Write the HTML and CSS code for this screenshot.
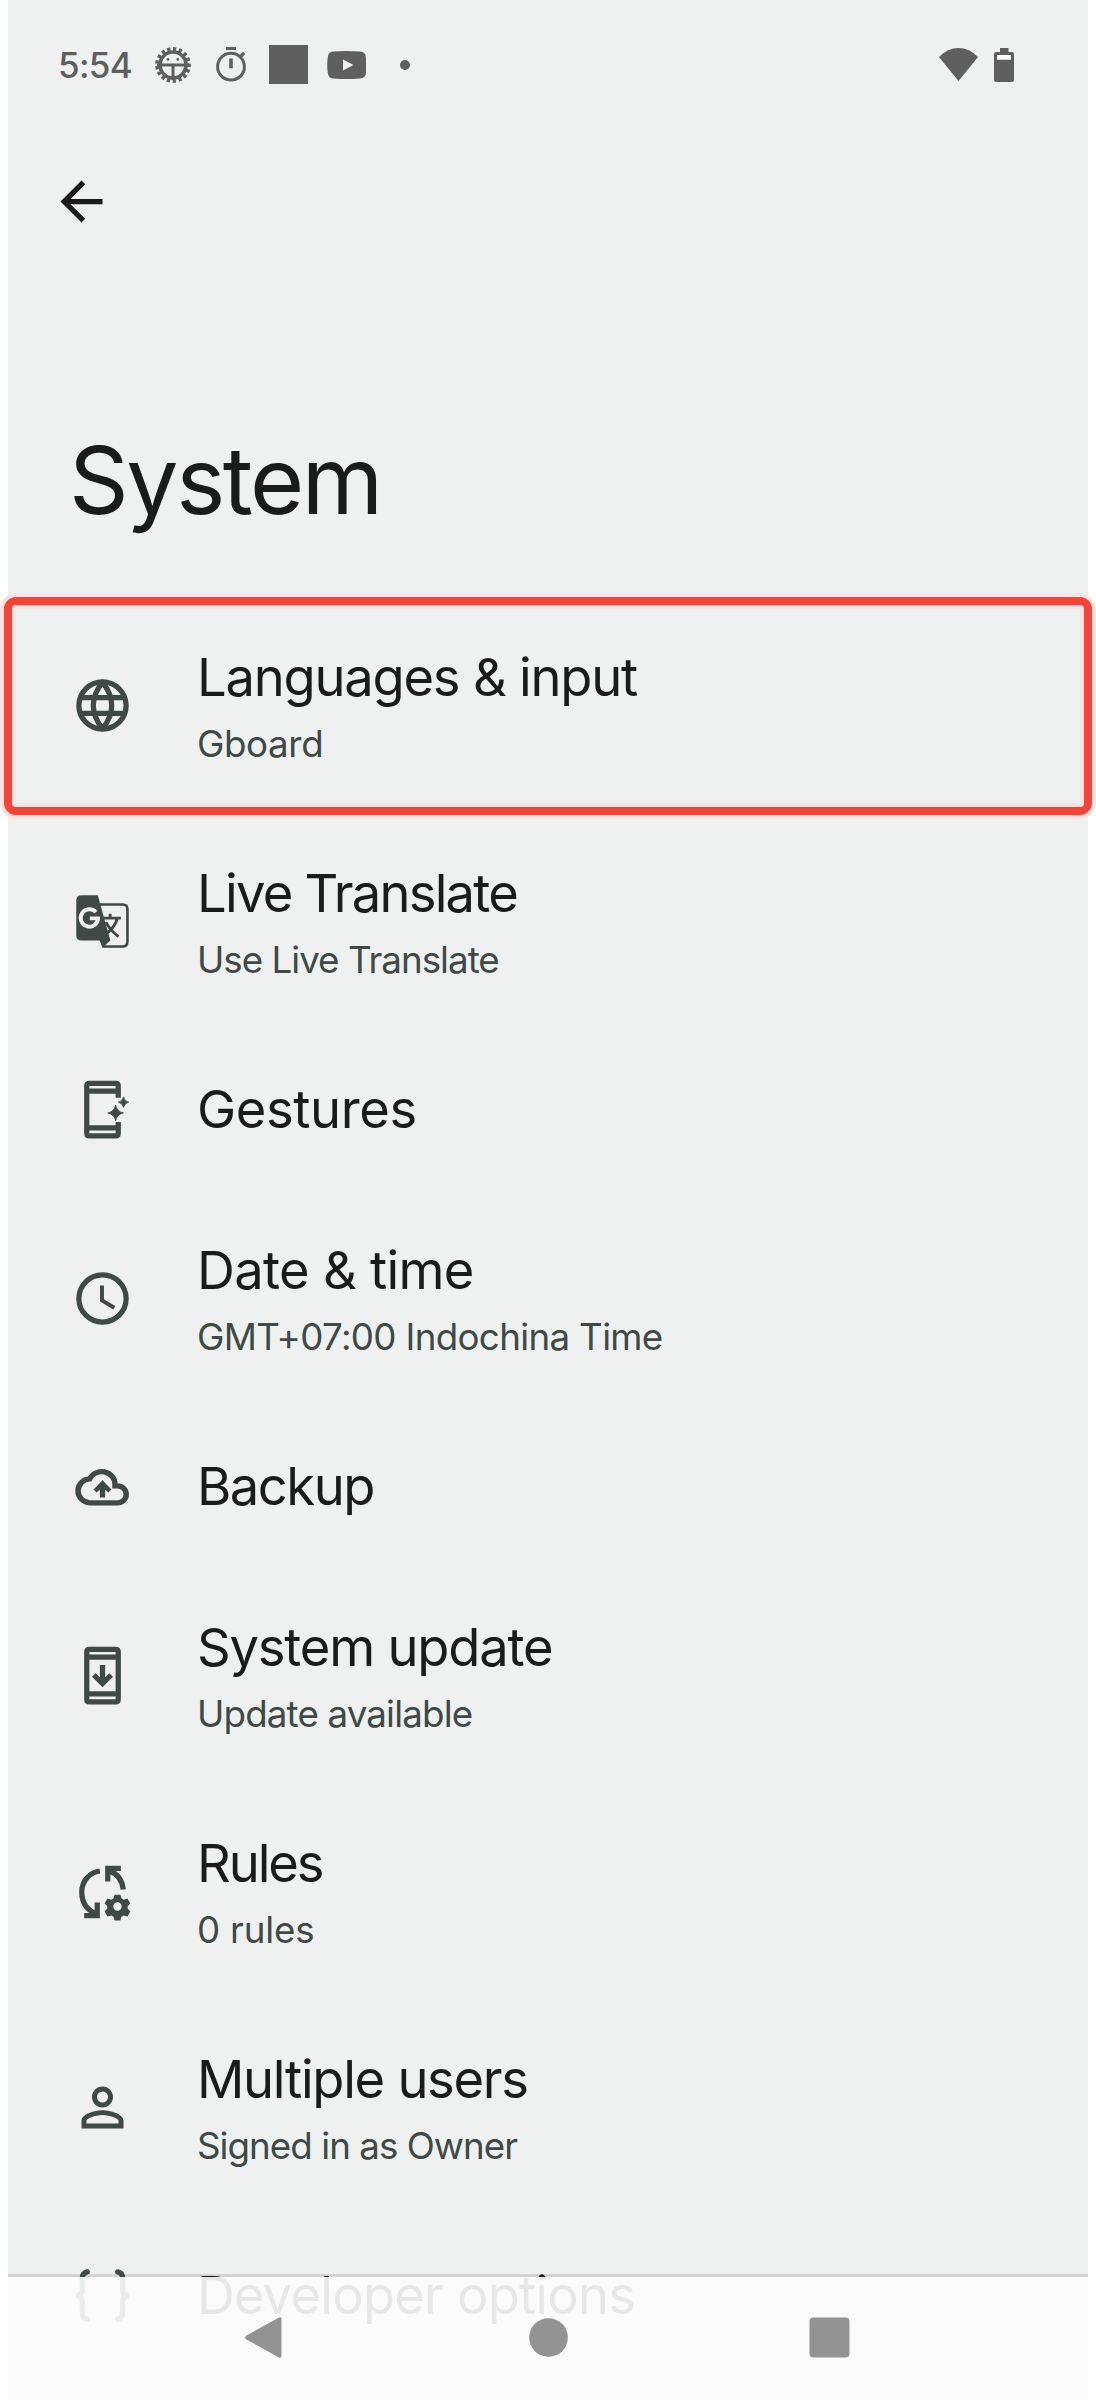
FILE: index.html
```
<!DOCTYPE html>
<html lang="en">
<head>
<meta charset="utf-8">
<title>System</title>
<link rel="stylesheet" href="styles.css">
</head>
<body>
<div class="phone">
  <header class="status">
    <span class="clock">5:54</span>
    <div class="notifications">
      <svg viewBox="0 0 39 39"><circle cx="20" cy="20" r="13" fill="none" stroke="currentColor" stroke-width="3.600"/><circle cx="20" cy="20" r="15.600" fill="none" stroke="currentColor" stroke-width="4.600" pathLength="34" stroke-dasharray="1.100 .900" stroke-dashoffset=".5"/><path d="M4 20h32M20 20v15" stroke="currentColor" stroke-width="3"/><circle cx="15" cy="14.4" r="1.400"/><circle cx="24.8" cy="14.4" r="1.400"/></svg>
      <svg viewBox="0 0 39 39"><circle cx="20" cy="21.7" r="13.4" fill="none" stroke="currentColor" stroke-width="3"/><path d="M15 2h10v3H15zM18.2 13.6h3.600v9.6h-3.600z"/><path d="M29 12l4.200-4.200" stroke="currentColor" stroke-width="3.200"/></svg>
      <svg viewBox="0 0 39 39"><path d="M0 0h39v39H0z"/></svg>
      <svg viewBox="0 0 39 39"><path fill-rule="evenodd" d="M6 6.400Q19.500 5.400 33 6.400Q39 6.800 39 13V27Q39 33.200 33 33.600Q19.500 34.600 6 33.600Q1.500 33.200.8 28Q-.4 20 .8 12Q1.500 6.800 6 6.400zM16 14.500v11l10.500-5.500z"/></svg>
      <svg viewBox="0 0 39 39"><circle cx="20" cy="20" r="5"/></svg>
    </div>
    <div class="signals">
      <svg class="wifi" viewBox="0 0 39 33"><path d="M0 9Q8.500 0 19.500 0T39 9L19.500 33z"/></svg>
      <svg class="battery" viewBox="0 0 20 34"><path fill-rule="evenodd" d="M6 0h8.500v4H18q2 0 2 2v26q0 2-2 2H2q-2 0-2-2V6q0-2 2-2h4zM3 7v4.500h14V7z"/><path class="battery-gap" d="M3 7h14v4.500H3z"/></svg>
    </div>
  </header>

  <svg class="back" viewBox="0 0 24 24"><path d="M20 11H7.830l5.590-5.590L12 4l-8 8 8 8 1.410-1.410L7.830 13H20v-2z"/></svg>
  <h1 class="page-title">System</h1>

  <main class="list">
    <div class="row highlighted">
      <svg class="icon" viewBox="0 0 24 24"><g fill="none" stroke="currentColor" stroke-width="2" stroke-linejoin="round"><circle cx="12" cy="12" r="9"/><path d="M3.500 9h17M3.500 15h17M12 3.200C9.700 6 8.500 8.500 8.500 12s1.200 6 3.500 8.800c2.300-2.800 3.500-5.300 3.500-8.800S14.300 6 12 3.200z"/></g></svg>
      <div class="text"><div class="name languages">Languages &amp; input</div><div class="summary gboard">Gboard</div></div>
    </div>
    <div class="row">
      <svg class="icon" viewBox="0 0 24 24"><path d="M4 2h6.200L15 19.200 12 22l-1.100-2.800H4q-2 0-2-2V4q0-2 2-2z"/><g fill="none" stroke="currentColor"><path d="M11 5.500h8.700q1.800 0 1.800 1.800v12.400q0 1.800-1.800 1.800H12" stroke-width="1"/><path d="M12.500 10.700H19M14.900 9v1.700M17.600 10.700c-.4 2.300-2 4.300-4.100 6M13.300 12.200c1 2.200 2.500 3.800 4.800 5.600" stroke-width="1.100"/></g><path class="cut" d="M9.500 8.500A3.300 3.300 0 1 0 10.300 10.800H7.200"/></svg>
      <div class="text"><div class="name live">Live Translate</div><div class="summary use-live">Use Live Translate</div></div>
    </div>
    <div class="row single">
      <svg class="icon" viewBox="0 0 24 24"><path fill-rule="evenodd" d="M7 1h10q2 0 2 2v4.500h-2V6H7v12h10v-1.200h2V21q0 2-2 2H7q-2 0-2-2V3q0-2 2-2zM7 3v1h10V3zM7 20v1h10v-1z"/><path d="M17 10.300Q17.500 12.800 20 13.300Q17.500 13.800 17 16.300Q16.500 13.800 14 13.300Q16.500 12.800 17 10.300zM20 7.200Q20.400 8.900 22 9.200Q20.400 9.500 20 11.200Q19.600 9.500 18 9.200Q19.600 8.900 20 7.200z" stroke="currentColor" stroke-width=".3"/></svg>
      <div class="text"><div class="name gestures">Gestures</div></div>
    </div>
    <div class="row">
      <svg class="icon" viewBox="0 0 24 24"><g fill="none" stroke="currentColor"><circle cx="12" cy="12" r="9" stroke-width="2"/><path d="M11.800 7v5.700l4.700 2.800" stroke-width="1.500"/></g></svg>
      <div class="text"><div class="name date">Date &amp; time</div><div class="summary zone">GMT+07:00 Indochina Time</div></div>
    </div>
    <div class="row single">
      <svg class="icon" viewBox="0 0 24 24"><path d="M7.500 18.200H17.700a3.200 3.200 0 0 0 0-6.400H16.800V11a4.900 4.900 0 0 0-9.300-1.900A4.560 4.560 0 0 0 7.500 18.200z" transform="matrix(1.040 0 0 1 -.700 0)" fill="none" stroke="currentColor" stroke-width="2"/><path d="M12 9.600l3.400 3.500-1.200 1.200-1.200-1.200v3.100h-2v-3.100l-1.200 1.200-1.200-1.200z"/></svg>
      <div class="text"><div class="name backup">Backup</div></div>
    </div>
    <div class="row">
      <svg class="icon" viewBox="0 0 24 24"><path fill-rule="evenodd" d="M7 1h10q2 0 2 2v18q0 2-2 2H7q-2 0-2-2V3q0-2 2-2zM7 3v1h10V3zM7 6v12h10V6zM7 20v1h10v-1z"/><path d="M12 16.500l4-4-1.400-1.400-1.600 1.600V8h-2v4.700l-1.600-1.600L8 12.500z"/></svg>
      <div class="text"><div class="name update">System update</div><div class="summary available">Update available</div></div>
    </div>
    <div class="row">
      <svg class="icon" viewBox="0 0 24 24"><g fill="none" stroke="currentColor" stroke-width="2"><path d="M11 4.200C7 4.800 4.100 8 4.100 12.200c0 3.800 1.900 6.800 5.400 8.300M5 21.200h5V16.200M14 8.200V3.200h5M14.300 4c3.300 1.200 5.300 3.900 5.600 7.200"/></g><path fill-rule="evenodd" d="M16.600 13.200h2.200l.4 1.400.9.500 1.400-.4 1.100 1.900-1 1v1l1 1-1.100 1.900-1.400-.4-.9.500-.4 1.400h-2.200l-.4-1.400-.9-.5-1.400.4-1.100-1.900 1-1v-1l-1-1 1.100-1.900 1.400.4.900-.5zM17.700 16.100a1.600 1.600 0 1 0 0 3.200 1.600 1.600 0 0 0 0-3.200z"/></svg>
      <div class="text"><div class="name rules">Rules</div><div class="summary rule-count">0 rules</div></div>
    </div>
    <div class="row">
      <svg class="icon" viewBox="0 0 24 24"><path d="M12 5.900a2.100 2.100 0 1 1 0 4.200 2.100 2.100 0 0 1 0-4.200m0 9c2.970 0 6.100 1.460 6.100 2.100v1.100H5.900V17c0-.64 3.130-2.100 6.100-2.100M12 4C9.790 4 8 5.790 8 8s1.790 4 4 4 4-1.790 4-4-1.790-4-4-4zm0 9c-2.670 0-8 1.340-8 4v3h16v-3c0-2.660-5.330-4-8-4z"/></svg>
      <div class="text"><div class="name users">Multiple users</div><div class="summary owner">Signed in as Owner</div></div>
    </div>
    <div class="row single">
      <svg class="icon" viewBox="0 0 24 24"><path d="M6.200 3C4.800 3.300 4.300 4 4.300 5.500v4C4.300 11 3.800 12 2 12c1.800 0 2.300 1 2.300 2.500v4c0 1.500.5 2.200 1.900 2.500M17.800 3c1.400.3 1.900 1 1.900 2.500v4c0 1.500.5 2.500 2.300 2.500-1.800 0-2.300 1-2.300 2.500v4c0 1.500-.5 2.200-1.900 2.500" fill="none" stroke="currentColor" stroke-width="2" stroke-linecap="round"/></svg>
      <div class="text"><div class="name developer">Developer options</div></div>
    </div>
  </main>

  <nav class="navbar">
    <svg viewBox="0 0 63 63"><path d="M10.500 29.500L43 11.500q2.500-1 2.500 1.500v37q0 2.500-2.500 1.500L10.500 33.500q-3-2 0-4z"/></svg>
    <svg viewBox="0 0 63 63"><circle cx="31.500" cy="31.500" r="19.300"/></svg>
    <svg viewBox="0 0 63 63"><rect x="11.500" y="11.500" width="40" height="40" rx="4"/></svg>
  </nav>
</div>
</body>
</html>
```
FILE: styles.css
```
* {
  box-sizing: border-box;
}

body {
  margin: 0;
  background: #fff;
  font-family: Inter, Roboto, sans-serif;
  color: #191c1b;
}

svg {
  display: block;
  flex: none;
  fill: currentColor;
}

.phone {
  position: relative;
  width: 1080px;
  height: 2400px;
  margin: 0 8px;
  background: #eef1f0;
}

.status {
  display: flex;
  align-items: center;
  height: 129px;
  padding: 0 74px 0 50px;
  color: #5f5f5f;
}

.clock {
  width: 95px;
  font-size: 35px;
  font-weight: 500;
  letter-spacing: -0.7px;
}

.notifications {
  display: flex;
  gap: 19px;
}

.notifications svg {
  width: 39px;
  height: 39px;
}

.signals {
  display: flex;
  align-items: center;
  gap: 16px;
  margin-left: auto;
}

.wifi {
  width: 39px;
  height: 33px;
}

.battery {
  width: 20px;
  height: 34px;
}

.battery-gap {
  fill: #fafafa;
}

.back {
  width: 63px;
  height: 63px;
  margin: 41px 0 0 42px;
}

.page-title {
  margin: 190px 0 0 61px;
  font-size: 93px;
  font-weight: 400;
  line-height: 114px;
  letter-spacing: -2.4px;
}

.list {
  height: 1803px;
  margin-top: 60px;
  overflow: visible;
}

.row {
  position: relative;
  z-index: 1;
  display: flex;
  align-items: center;
  gap: 63px;
  height: 216px;
  padding-left: 63px;
}

.row.single {
  height: 161px;
}

.highlighted::after {
  content: "";
  position: absolute;
  inset: 0 -4px -2px;
  border: 8px solid #f24439;
  border-radius: 12px;
  box-shadow: 0 0 0 4px #ffe2df, inset 0 0 0 4px #ffe2df;
}

.icon {
  width: 63px;
  height: 63px;
  color: #404946;
}

.cut {
  fill: none;
  stroke: #eef1f0;
  stroke-width: 1.5px;
}

.text {
  align-self: flex-start;
  padding-top: 47px;
  white-space: nowrap;
}

.name {
  font-size: 52.5px;
  line-height: 66px;
}

.summary {
  margin-top: 10px;
  font-size: 36.75px;
  line-height: 47px;
  color: #404946;
}

.languages { letter-spacing: -1.23px; }
.gboard { letter-spacing: -0.4px; }
.live { letter-spacing: -1.75px; }
.use-live { letter-spacing: -1px; }
.gestures { letter-spacing: -0.4px; }
.date { letter-spacing: -0.7px; }
.zone { letter-spacing: -0.68px; }
.backup { letter-spacing: -1.5px; }
.update { letter-spacing: -1.2px; }
.available { letter-spacing: -0.85px; }
.rules { letter-spacing: -2.1px; }
.rule-count { letter-spacing: -0.2px; }
.users { letter-spacing: -1.3px; }
.owner { letter-spacing: -0.97px; }
.developer { letter-spacing: -0.8px; }

.navbar {
  position: absolute;
  inset: auto 0 0;
  z-index: 2;
  display: flex;
  justify-content: center;
  gap: 218px;
  height: 123px;
  padding-top: 28.5px;
  background: rgba(252, 252, 252, 0.91);
  color: #939393;
}

/* Divider sits beneath the scrolling rows. */
.phone::after {
  content: "";
  position: absolute;
  inset: auto 0 123px;
  height: 3px;
  background: #d3d3d3;
}

.navbar svg {
  width: 63px;
  height: 63px;
}
```
